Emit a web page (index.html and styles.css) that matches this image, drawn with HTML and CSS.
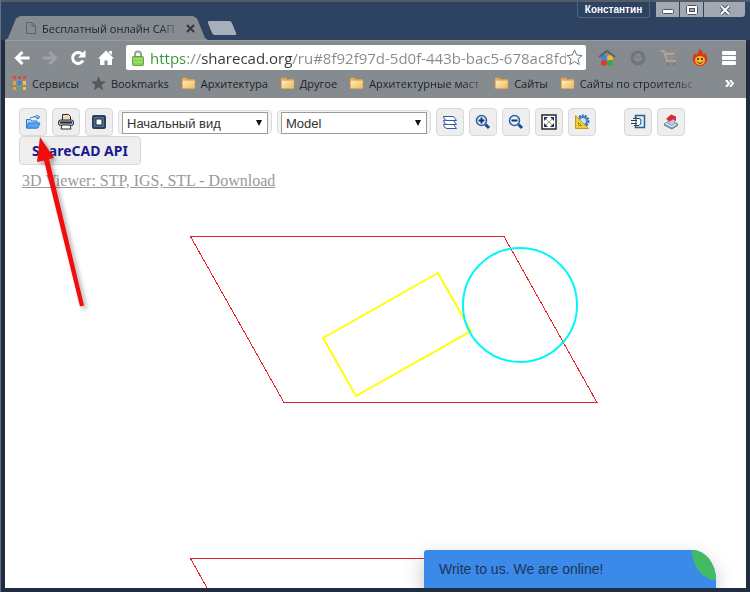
FILE: index.html
```html
<!DOCTYPE html>
<html lang="ru">

<head>
    <meta charset="UTF-8">
    <meta name="viewport" content="width=device-width, initial-scale=1.0">
    <title>Бесплатный онлайн САПР</title>
    <link rel="stylesheet" href="styles.css">
</head>

<body>
    <svg class="defs" width="0" height="0" aria-hidden="true">
        <defs>
            <linearGradient id="folder-fill" x1="0" y1="0" x2="1" y2="1">
                <stop offset="0" stop-color="#fff0c0" />
                <stop offset="1" stop-color="#f3b85c" />
            </linearGradient>
            <symbol id="folder" viewBox="0 0 16 14">
                <path d="M1 2.5q0-1 1-1h4l1.5 1.5H14q1 0 1 1V12q0 1-1 1H2q-1 0-1-1z" fill="#e9a84c" />
                <path d="M2 4.5h12.5V12q0 .5-.5.5H2z" fill="url(#folder-fill)" />
            </symbol>
            <g id="drawing" fill="none">
                <path d="M185.500 46.500H499L592 212.500H279Z" stroke="#e8202a" shape-rendering="crispEdges" />
                <path d="M318 148L433 83L466 141L351 206Z" stroke="#ffff00" stroke-width="2" />
                <circle cx="515" cy="115" r="57" stroke="#00f6fa" stroke-width="2" />
            </g>
        </defs>
    </svg>

    <header class="titlebar">
        <div class="tab">
            <svg width="12" height="14" viewBox="0 0 12 14" fill="none" stroke="#60656b"><path d="M1.500 1.500h5.500l3.500 3.500v7.500h-9zM7 1.500V5h3.500" /></svg>
            <span class="tab-title">Бесплатный онлайн САП</span>
            <button class="tab-close" aria-label="Закрыть вкладку">
                <svg width="9" height="9" viewBox="0 0 9 9" stroke="#34383d" stroke-width="2"><path d="M1 1l7 7M8 1L1 8" /></svg>
            </button>
        </div>
        <button class="new-tab" aria-label="Новая вкладка"></button>
        <button class="user">Константин</button>
        <div class="window-buttons">
            <button aria-label="Свернуть"><svg width="14" height="10" viewBox="0 0 14 10"><rect x="1.500" y="4.500" width="11" height="4" rx="1" fill="#fff" stroke="#4d5460" /></svg></button>
            <button aria-label="Развернуть"><svg width="12" height="10" viewBox="0 0 12 10" fill="none"><rect x="2" y="1.500" width="8" height="7" stroke="#fff" stroke-width="3" /><rect x=".5" y=".5" width="11" height="9" rx="1" stroke="#4d5460" /><rect x="3.500" y="3.500" width="5" height="3" stroke="#4d5460" /></svg></button>
            <button class="close" aria-label="Закрыть"><svg width="12" height="10" viewBox="0 0 12 10"><path d="M2 1l8 8M10 1L2 9" stroke="#4d5460" stroke-width="4" /><path d="M2 1l8 8M10 1L2 9" stroke="#fff" stroke-width="2" /></svg></button>
        </div>
    </header>

    <div class="browser-bar">
        <nav class="nav-row">
            <button aria-label="Назад"><svg width="16" height="14" viewBox="0 0 16 14" fill="none" stroke="#fff" stroke-width="3"><path d="M15.500 7H3M8.500 1L2.500 7l6 6" /></svg></button>
            <button aria-label="Вперёд"><svg width="16" height="14" viewBox="0 0 16 14" fill="none" stroke="#9da2a7" stroke-width="3"><path d="M.5 7H13M7.500 1l6 6-6 6" /></svg></button>
            <button aria-label="Обновить"><svg width="16" height="16" viewBox="0 0 16 16"><path d="M13 10.500A5.500 5.500 0 1 1 12 4" fill="none" stroke="#fff" stroke-width="3" /><path d="M15.500 0v7.500H8z" fill="#fff" /></svg></button>
            <button aria-label="Домой"><svg width="16" height="16" viewBox="0 0 16 16" fill="#fff"><path d="M8 .5L16 8.500h-2V15H9.500v-4.500h-3V15H2V8.500H0zM11 1h3v4l-3-2z" /></svg></button>
            <div class="address">
                <svg width="12" height="16" viewBox="0 0 12 16"><path d="M3 8V4.500a3 3 0 0 1 6 0V8" fill="none" stroke="#9aa09c" stroke-width="2" /><rect x=".5" y="6.500" width="11" height="9" rx="1" fill="#86d04f" stroke="#5fa53a" /><path d="M1 9h10M1 12h10" stroke="#b4e88a" /></svg>
                <input type="text" aria-label="Адрес" value="https://sharecad.org/ru#8f92f97d-5d0f-443b-bac5-678ac8fd">
                <button class="star" aria-label="Добавить в закладки"><svg width="17" height="17" viewBox="0 0 17 17"><path d="M8.500 1l2.200 5 5.300.6-4 3.600 1.200 5.300-4.700-2.800-4.700 2.800L5 10.200 1 6.600 6.300 6z" fill="#fff" stroke="#70757b" /></svg></button>
            </div>
            <button class="extension" aria-label="Расширение"><svg width="18" height="18" viewBox="0 0 18 18"><circle cx="6" cy="9" r="3" fill="#3e86dc" /><circle cx="12" cy="9" r="3" fill="#f3b62d" /><circle cx="6" cy="14" r="3" fill="#dc3b32" /><circle cx="12" cy="14" r="3" fill="#36a848" /><path d="M1 8l8-6 8 6" fill="none" stroke="#58606c" stroke-width="2" /></svg></button>
            <button class="extension" aria-label="Расширение"><svg width="18" height="16" viewBox="0 0 18 16"><circle cx="9" cy="8" r="6" fill="#7e8389" stroke="#70757b" stroke-width="3" /><path d="M5 8q4 4 8 0M7 5h4" fill="none" stroke="#92979c" /></svg></button>
            <button class="extension" aria-label="Расширение"><svg width="18" height="16" viewBox="0 0 18 16" fill="none"><path d="M1 1h3l3 10h9M5 4h9" stroke="#a8a6a5" stroke-width="2" /><path d="M4 2h12M6 7h9M7 9h5" stroke="#b58c70" /><circle cx="8" cy="14" r="1" fill="#6b7077" /><circle cx="14" cy="14" r="1" fill="#6b7077" /></svg></button>
            <button class="extension" aria-label="Расширение"><svg width="16" height="18" viewBox="0 0 16 18"><path d="M7 0q5 2 4 6l2-2q3 4 2 8-2 5-7 5t-7-5Q0 8 3 4l1 2q3-2 3-6z" fill="#d83a12" /><ellipse cx="8" cy="11.500" rx="5" ry="4.500" fill="#f8b62e" /><path d="M5 12.500q3 4 6 0" stroke="#722010" fill="none" /><circle cx="6" cy="10" r="1" fill="#40180c" /><circle cx="10" cy="10" r="1" fill="#40180c" /></svg></button>
            <button class="menu" aria-label="Меню"><svg width="14" height="14" viewBox="0 0 14 14" fill="#fff"><rect width="14" height="4" rx="1" /><rect y="5" width="14" height="4" rx="1" /><rect y="10" width="14" height="4" rx="1" /></svg></button>
        </nav>

        <nav class="bookmarks">
            <a href="#"><svg width="15" height="15" viewBox="0 0 15 15"><path d="M1 0h3v3H1zM6 0h3v3H6zM11 0h3v3h-3z" fill="#d94a41" /><path d="M1 5h3v4H1zM1 11h3v3H1z" fill="#e9a13a" /><path d="M6 5h3v4H6z" fill="#3f7fd2" /><path d="M6 11h3v3H6z" fill="#58ad52" /><path d="M11 5h3v4h-3zM11 11h3v3h-3z" fill="#efc443" /></svg><span>Сервисы</span></a>
            <a href="#"><svg width="15" height="15" viewBox="0 0 15 15"><path d="M7.500 0l2 5.300 5.500.2-4.300 3.500 1.500 5.500-4.700-3.200-4.700 3.200L4.300 9 0 5.500l5.500-.2z" fill="#55595e" /></svg><span>Bookmarks</span></a>
            <a href="#"><svg width="15" height="14"><use href="#folder" /></svg><span>Архитектура</span></a>
            <a href="#"><svg width="15" height="14"><use href="#folder" /></svg><span>Другое</span></a>
            <a href="#"><svg width="15" height="14"><use href="#folder" /></svg><span class="long">Архитектурные маст</span></a>
            <a href="#"><svg width="15" height="14"><use href="#folder" /></svg><span>Сайты</span></a>
            <a href="#"><svg width="15" height="14"><use href="#folder" /></svg><span class="long">Сайты по строительс</span></a>
            <button class="more" aria-label="Ещё закладки"><svg width="9" height="7" viewBox="0 0 9 7" fill="none" stroke="#fff" stroke-width="2"><path d="M1 0l3 3.500L1 7M5 0l3 3.500L5 7" /></svg></button>
        </nav>
    </div>

    <main class="page">
        <div class="tools">
            <button class="tool" aria-label="Open"><svg width="16" height="16" viewBox="0 0 16 16" stroke="#2d7bd0"><path d="M1.500 14V5.500h4l1.500 1.500h5V14z" fill="#a8d4f8" /><path d="M1.500 14l2-5h11.500l-2 5z" fill="#58a9ee" /><path d="M5 4l8-2.500V5M10 3l3 2 2-3" fill="none" /></svg></button>
            <button class="tool" aria-label="Print"><svg width="16" height="16" viewBox="0 0 16 16" stroke="#252b35"><path d="M4.500 6V.5h6l2 2V6" fill="#f2d8b8" /><rect x=".5" y="6" width="15" height="5.500" rx="2" fill="#b3b9c2" /><path d="M2 8.500h12" stroke-width="2" /><path d="M4 11h8l1 4H3z" fill="#fff" /></svg></button>
            <button class="tool" aria-label="Full screen"><svg width="14" height="14" viewBox="0 0 14 14"><rect x="1" y="1" width="12" height="12" rx="1" fill="#54708d" stroke="#2b405a" stroke-width="2" /><rect x="4" y="4" width="6" height="6" fill="#fff" stroke="#172b43" /></svg></button>
            <div class="select">
                <select aria-label="View">
                    <option>Начальный вид</option>
                </select>
            </div>
            <div class="select">
                <select aria-label="Layout">
                    <option>Model</option>
                </select>
            </div>
            <button class="tool" aria-label="Layers"><svg width="16" height="15" viewBox="0 0 16 15" fill="#fff" stroke="#2c5ba0"><path d="M1.500 9.500h10l3 4H5q-3 0-3.500-4z" /><path d="M1.500 5.500h10l3 4H5q-3 0-3.500-4z" /><path d="M1.500 1.500h10l3 4H5q-3 0-3.500-4z" /></svg></button>
            <button class="tool" aria-label="Zoom in"><svg width="16" height="16" viewBox="0 0 16 16"><path d="M10.500 10.500L14 14" stroke="#174b97" stroke-width="3" /><circle cx="6.500" cy="6.500" r="5" fill="#e2f0ff" stroke="#295da5" stroke-width="1.500" /><path d="M6.500 3.500v6M3.500 6.500h6" stroke="#17345f" stroke-width="2" /></svg></button>
            <button class="tool" aria-label="Zoom out"><svg width="16" height="16" viewBox="0 0 16 16"><path d="M10.500 10.500L14 14" stroke="#174b97" stroke-width="3" /><circle cx="6.500" cy="6.500" r="5" fill="#e2f0ff" stroke="#295da5" stroke-width="1.500" /><path d="M3.500 6.500h6" stroke="#17345f" stroke-width="2" /></svg></button>
            <button class="tool" aria-label="Fit"><svg width="16" height="16" viewBox="0 0 16 16"><rect x="1" y="1" width="14" height="14" fill="#fff" stroke="#202a36" stroke-width="1.500" /><path d="M4 4l8 8M12 4l-8 8" stroke="#bd9a6b" /><path d="M3 3h4L3 7zM13 3v4L9 3zM3 13V9l4 4zM13 13H9l4-4z" fill="#1b355b" /></svg></button>
            <button class="tool" aria-label="Settings"><svg width="16" height="16" viewBox="0 0 16 16"><circle cx="9" cy="7" r="5.500" fill="none" stroke="#2c6bc0" stroke-width="2" stroke-dasharray="2 1" /><circle cx="9" cy="7" r="4" fill="#cae2fa" stroke="#3c7cd0" stroke-width="2" /><path d="M1.500 1.500v13h13z" fill="#f0cd35" stroke="#c09a22" /><path d="M4.500 8.500v3h3z" fill="#cae2fa" stroke="#a58722" /></svg></button>
            <button class="tool apart" aria-label="Notes"><svg width="16" height="16" viewBox="0 0 16 16" stroke="#243e5b"><path d="M5.500 1.500h9v12h-9z" fill="#d9ecfa" stroke="#2f5f94" stroke-width="1.500" /><path d="M3 4.500h6q2 0 2 3t-2 4H4" fill="#fff" /><path d="M1 6.500h6M1 9.500h6M6 3v9" /></svg></button>
            <button class="tool" aria-label="3D"><svg width="16" height="16" viewBox="0 0 16 16"><path d="M1 10l5-3 9 3-6 4z" fill="#e8f1f8" stroke="#668fae" /><path d="M5 6v4l4 1.500 3-2V5z" fill="#b7c6e2" stroke="#52648d" stroke-width=".5" /><path d="M3 5L8 .5l5 2V7L10 5 7 7.500z" fill="#e12430" /><path d="M1 11l8 4 6-4" fill="none" stroke="#52748c" /></svg></button>
            <button class="api">ShareCAD API</button>
        </div>
        <a class="viewer-link" href="#">3D Viewer: STP, IGS, STL - Download</a>

        <div class="canvas">
            <svg width="100%" height="322" role="img" aria-label="Drawing"><use href="#drawing" /></svg>
            <svg width="100%" height="322" role="img" aria-label="Drawing"><use href="#drawing" /></svg>
        </div>

        <svg class="arrow" width="64" height="184" viewBox="0 0 64 184" fill="#f40b0b" aria-hidden="true">
            <path d="M10 4L24 25L19 26L54 172.500L50 173.500L14 27.500L7 29Z" />
        </svg>

        <button class="chat">Write to us. We are online!
            <svg class="leaf" width="24" height="30" viewBox="0 0 24 30"><path d="M0 0A24 30 0 0 1 24 30A24 30 0 0 1 0 0z" fill="#43bb65" /></svg>
        </button>
    </main>
</body>

</html>
```
FILE: styles.css
```css
* {
    box-sizing: border-box;
}

body {
    display: flex;
    flex-direction: column;
    height: 100vh;
    margin: 0;
    padding: 0 4px 4px;
    overflow: hidden;
    background-color: #202d40;
    border-left: 1px solid #647083;
    font-family: 'Open Sans', sans-serif;
    font-size: 11px;
    color: #1d2228;
}

button {
    padding: 0;
    border: none;
    background: none;
    font: inherit;
    color: inherit;
    cursor: pointer;
}

svg {
    display: block;
    flex: none;
}

.defs {
    position: absolute;
}

/* title bar */
.titlebar {
    display: flex;
    flex: none;
    align-items: flex-end;
    height: 40px;
    margin: 0 -4px;
    padding-left: 4px;
    border-top: 2px solid #535d68;
    background-color: #2e4261;
}

.tab {
    display: flex;
    align-items: center;
    width: 203px;
    height: 24px;
    padding: 0 13px 0 20px;
    background-color: #868c92;
    clip-path: polygon(0 100%, 3px 92%, 11px 10%, 15px 0, 188px 0, 192px 10%, 200px 92%, 100% 100%);
}

.tab-title {
    flex: 1;
    margin-left: 5px;
    white-space: nowrap;
    mask-image: linear-gradient(to right, #000 115px, transparent 145px);
}

.tab-close {
    margin-left: 5px;
}

.new-tab {
    width: 24px;
    height: 14px;
    margin: 0 0 5px 2px;
    border-radius: 2px;
    background-color: #a7afba;
    transform: skewX(22deg);
}

.user {
    align-self: flex-start;
    width: 73px;
    height: 16px;
    margin-left: auto;
    border: 1px solid #53647e;
    border-top: none;
    border-radius: 0 0 3px 3px;
    font-family: 'Liberation Sans', sans-serif;
    font-size: 10px;
    font-weight: bold;
    line-height: 14px;
    color: #fff;
}

.window-buttons {
    display: flex;
    align-self: flex-start;
    gap: 1px;
    margin: 0 5px 0 6px;
}

.window-buttons button {
    display: flex;
    align-items: center;
    justify-content: center;
    width: 23px;
    height: 15px;
    background-color: #a1a8b2;
}

.window-buttons .close {
    width: 41px;
    border-radius: 0 0 3px 0;
}

/* address row and bookmarks */
.browser-bar {
    flex: none;
    height: 58px;
    background-color: #868b90;
    border-top: 1px solid #989da2;
}

.nav-row {
    display: flex;
    align-items: center;
    gap: 12px;
    padding: 4px 10px 0 9px;
}

.address {
    display: flex;
    flex: 1;
    align-items: center;
    min-width: 0;
    height: 25px;
    padding: 0 3px 0 6px;
    border-radius: 2px;
    background-color: #fff;
}

.address input {
    flex: 1;
    min-width: 0;
    height: 24px;
    margin-left: 6px;
    padding: 0;
    border: none;
    outline: none;
    /* scheme, separator, host, path */
    background: linear-gradient(to right, #3a9433 37px, #888 37px 51px, #33373b 51px 142px, #888 142px);
    background-clip: text;
    -webkit-background-clip: text;
    color: transparent;
    font-family: 'Open Sans', sans-serif;
    font-size: 15px;
}

.extension {
    display: flex;
    justify-content: center;
    width: 18px;
    margin-right: 1px;
}

.bookmarks {
    display: flex;
    align-items: center;
    gap: 12px;
    height: 26px;
    padding: 0 12px 0 7px;
}

.bookmarks a {
    display: flex;
    align-items: center;
    gap: 5px;
    color: inherit;
    text-decoration: none;
    white-space: nowrap;
}

.bookmarks .long {
    min-width: 113px;
    mask-image: linear-gradient(to right, #000 95px, transparent 120px);
}

.more {
    margin-left: auto;
}

/* viewer page */
.page {
    position: relative;
    display: flex;
    flex: 1;
    flex-direction: column;
    min-height: 0;
    padding-top: 10px;
    overflow: hidden;
    background-color: #fff;
}

.tools {
    display: flex;
    flex-wrap: wrap;
    column-gap: 5px;
    padding: 0 48px 0 14px;
}

.tool {
    display: flex;
    align-items: center;
    justify-content: center;
    width: 28px;
    height: 28px;
    border: 1px solid #d9d9d9;
    border-radius: 4px;
    background-color: #eee;
}

.apart {
    margin-left: 23px;
}

.select {
    position: relative;
    width: 154px;
    height: 24px;
    margin-top: 2px;
    padding: 1px 3px;
    border: 1px solid #ddd;
    border-radius: 4px;
    background-color: #f3f3f3;
}

.select select {
    display: block;
    width: 100%;
    height: 22px;
    padding: 0 4px;
    border: 1px solid #9b9b9b;
    border-radius: 0;
    appearance: none;
    background-color: #fff;
    color: #333;
    font-family: 'Liberation Sans', sans-serif;
    font-size: 13px;
}

.select::after {
    content: '';
    position: absolute;
    top: 9px;
    right: 9px;
    border: 3px solid transparent;
    border-top: 6px solid #111;
    border-bottom: none;
}

.api {
    height: 29px;
    padding: 0 12px;
    border: 1px solid #d9d9d9;
    border-radius: 4px;
    background-color: #eee;
    color: #1b1b8f;
    font-family: 'Noto Sans', sans-serif;
    font-size: 14px;
    font-weight: bold;
    line-height: 27px;
}

.viewer-link {
    align-self: flex-start;
    margin: 7px 0 0 17px;
    color: #999;
    font-family: 'Liberation Serif', serif;
    font-size: 16px;
    line-height: 18px;
}

.canvas {
    flex: 1;
    min-height: 0;
    overflow: hidden;
}

.arrow {
    position: absolute;
    top: 35px;
    left: 25px;
    pointer-events: none;
    filter: drop-shadow(3px 3px 2px rgba(0, 0, 0, 0.3));
}

.chat {
    position: absolute;
    right: 30px;
    bottom: 0;
    width: 292px;
    height: 38px;
    padding: 0 15px;
    border-radius: 3px 24px 0 0 / 3px 30px 0 0;
    background-color: #3b89e9;
    box-shadow: 0 8px 20px rgba(0, 0, 0, 0.25);
    color: #1c3657;
    font-family: 'Liberation Sans', sans-serif;
    font-size: 14px;
    text-align: left;
}

.leaf {
    position: absolute;
    top: 0;
    right: 0;
}
```
